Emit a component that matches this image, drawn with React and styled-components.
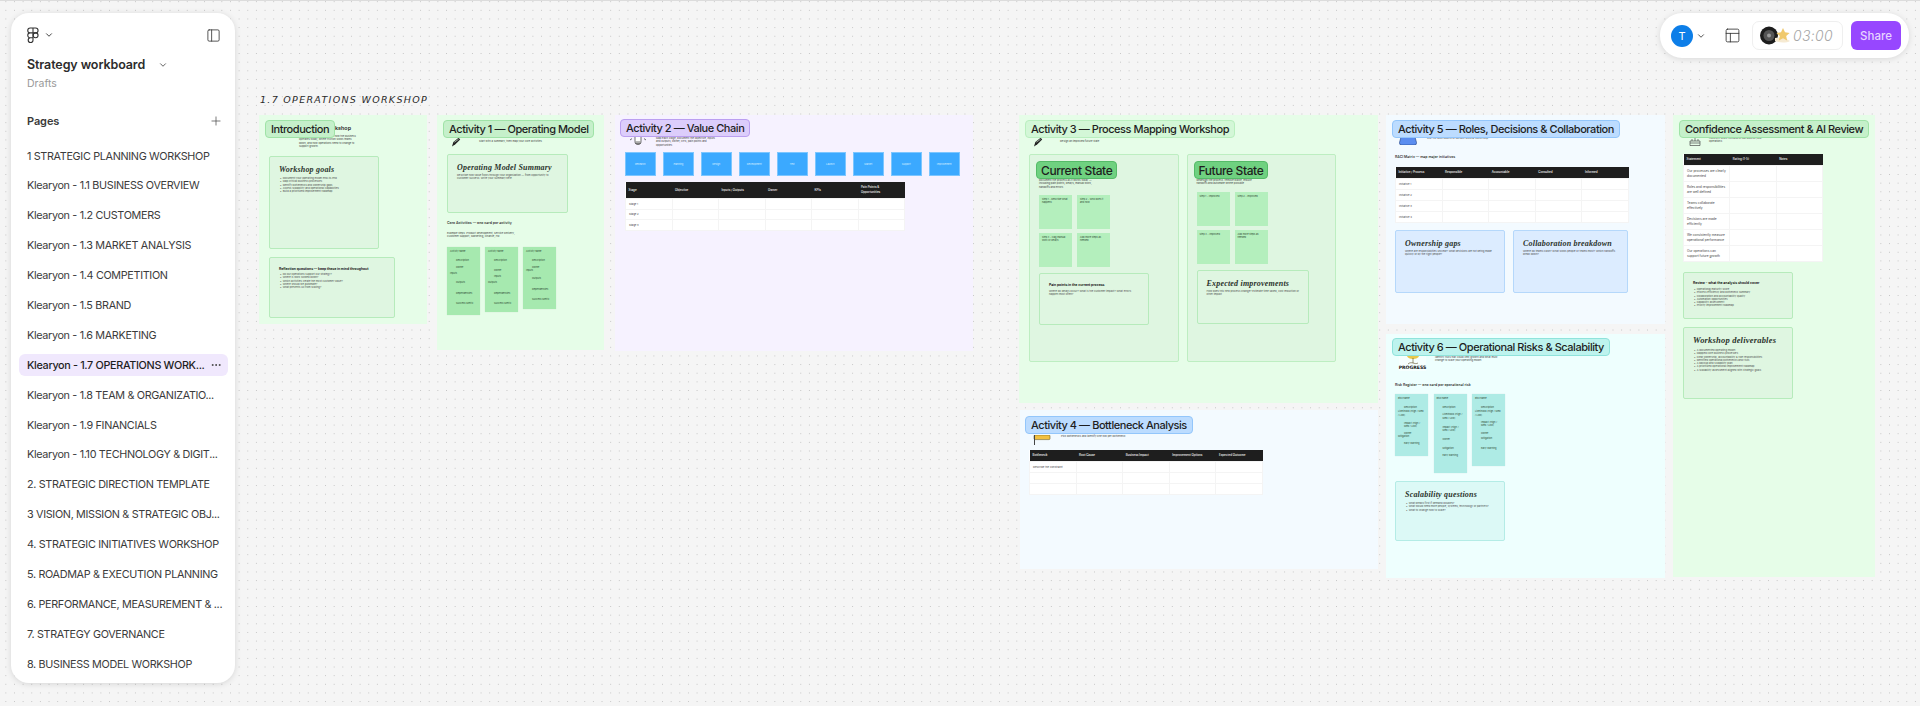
import React from 'react';
import styled, { createGlobalStyle } from 'styled-components';
import {
  ChevronDown,
  Ellipsis,
  PanelLeft,
  PanelsTopLeft,
  Plus,
} from 'lucide-react';

const GlobalStyle = createGlobalStyle`
  html, body {
    margin: 0;
    padding: 0;
    background: #f5f5f5;
  }
  body {
    font-family: Inter, "Liberation Sans", sans-serif;
    color: #1e1e1e;
  }
`;

const tones = {
  green: { section: '#e6fde8', card: '#dff6e1', line: '#b6ebbb', label: '#c5f0ca', labelLine: '#9fe3a7', sticky: '#a6e9af' },
  mint: { section: '#e6fde8', card: '#dff6e1', line: '#b6ebbb', label: '#d3f7d7', labelLine: '#b9efbf', sticky: '#a6e9af' },
  purple: { section: '#f6f2ff', card: '#efe8ff', line: '#d9c8fb', label: '#dccdfb', labelLine: '#bb9ff0', sticky: '#dccdfb' },
  blue: { section: '#f3faff', card: '#dcecff', line: '#b5d8fb', label: '#bcdcff', labelLine: '#93c6fb', sticky: '#bcdcff' },
  teal: { section: '#eefffe', card: '#dcf9f6', line: '#b4ece6', label: '#bdf3ee', labelLine: '#8fe3db', sticky: '#aeebe5' },
};

const handFont = `"Liberation Serif", "DejaVu Serif", serif`;

const Canvas = styled.div`
  position: relative;
  width: 1920px;
  height: 706px;
  overflow: hidden;
  box-sizing: border-box;
  border-top: 1px solid #dcdcdc;
  background-color: #f5f5f5;
  background-image: radial-gradient(circle at center, #c4c4c4 0.6px, transparent 0.9px);
  background-size: 8.65px 8.65px;
  background-position: 1.5px 5px;
`;

/* ---------- sidebar ---------- */

const Sidebar = styled.aside`
  position: absolute;
  left: 11px;
  top: 12px;
  width: 224px;
  height: 670px;
  box-sizing: border-box;
  padding: 12px 7px 0 8px;
  background: #fff;
  border-radius: 18px;
  box-shadow: 0 1px 6px rgba(0, 0, 0, 0.13);
`;

const SideTop = styled.div`
  display: flex;
  align-items: center;
  justify-content: space-between;
  height: 20px;
  padding: 0 7px 0 8px;
`;

const LogoButton = styled.div`
  display: flex;
  align-items: center;
  gap: 5px;
  color: #333;
`;

const FileTitle = styled.div`
  display: flex;
  align-items: center;
  gap: 13px;
  margin: 11px 0 0 8px;
  font-size: 12.5px;
  font-weight: 600;
  letter-spacing: -0.1px;
  line-height: 18px;
  color: #2c2c2c;
`;

const Drafts = styled.div`
  margin: 2px 0 0 8px;
  font-size: 10.5px;
  line-height: 16px;
  color: #9a9a9a;
`;

const PagesHead = styled.div`
  display: flex;
  align-items: center;
  justify-content: space-between;
  height: 18px;
  margin: 20px 5px 0 8px;
  font-size: 11px;
  font-weight: 600;
  letter-spacing: -0.1px;
  color: #3a3a3a;
`;

const PageList = styled.ul`
  list-style: none;
  margin: 15px 0 0;
  padding: 0;
`;

const PageRow = styled.li`
  display: flex;
  align-items: center;
  justify-content: space-between;
  height: 22px;
  margin-bottom: 7.9px;
  padding: 0 6px 0 8px;
  border-radius: 6px;
  font-size: 10.8px;
  letter-spacing: -0.33px;
  font-weight: ${(p) => (p.$active ? 500 : 400)};
  color: ${(p) => (p.$active ? '#1e1e1e' : '#3b3b3b')};
  background: ${(p) => (p.$active ? '#f0e8fd' : 'transparent')};
  white-space: nowrap;
`;

/* ---------- toolbar ---------- */

const Toolbar = styled.div`
  position: absolute;
  left: 1660px;
  top: 12px;
  width: 249px;
  height: 45px;
  box-sizing: border-box;
  display: flex;
  align-items: center;
  padding: 0 8px 0 11px;
  background: #fff;
  border-radius: 22px;
  box-shadow: 0 1px 6px rgba(0, 0, 0, 0.12);
`;

const Avatar = styled.div`
  display: flex;
  align-items: center;
  justify-content: center;
  width: 22px;
  height: 22px;
  border-radius: 50%;
  background: #0d7ee8;
  color: #fff;
  font-size: 11px;
`;

const AvatarMenu = styled.div`
  display: flex;
  align-items: center;
  gap: 3px;
  color: #444;
`;

const LayoutIcon = styled(PanelsTopLeft)`
  flex: none;
  margin-left: 18px;
  color: #333;
`;

const TimerPill = styled.div`
  display: flex;
  align-items: center;
  justify-content: space-between;
  width: 91px;
  height: 29px;
  box-sizing: border-box;
  margin: 0 8px 0 11px;
  padding: 0 9px 0 7px;
  border: 1px solid #efefef;
  border-radius: 7px;
`;

const TimerText = styled.span`
  font-size: 14px;
  font-style: italic;
  font-weight: 300;
  letter-spacing: 0.3px;
  color: #a6a6a6;
`;

const ShareButton = styled.button`
  width: 50px;
  height: 29px;
  padding: 0;
  border: 0;
  border-radius: 6px;
  background: #9747ff;
  color: #e7d5ff;
  font: 500 11.5px Inter, sans-serif;
`;

/* ---------- board ---------- */

const BoardTitle = styled.div`
  position: absolute;
  left: 260px;
  top: 93px;
  font-family: "DejaVu Sans", sans-serif;
  font-size: 9.5px;
  font-style: italic;
  letter-spacing: 1.3px;
  line-height: 12px;
  color: #2a2a2a;
  white-space: nowrap;
`;

const Section = styled.section`
  position: absolute;
  left: ${(p) => p.$x}px;
  top: ${(p) => p.$y - 1}px;
  width: ${(p) => p.$w}px;
  height: ${(p) => p.$h}px;
  box-sizing: border-box;
  padding-left: ${(p) => p.$pad || 10}px;
  background: ${(p) => tones[p.$tone].section};
`;

const Label = styled.div`
  position: absolute;
  left: ${(p) => p.$left ?? 6}px;
  top: ${(p) => p.$top ?? 5}px;
  z-index: 2;
  box-sizing: border-box;
  height: 18px;
  padding: 0 5px;
  display: flex;
  align-items: center;
  border: 1px solid ${(p) => tones[p.$tone].labelLine};
  border-radius: 4px;
  background: ${(p) => tones[p.$tone].label};
  font-size: 11px;
  font-weight: 500;
  letter-spacing: -0.45px;
  white-space: nowrap;
`;

const StateLabel = styled(Label)`
  left: 6px;
  top: 6px;
  height: 18px;
  font-size: 12px;
  letter-spacing: -0.4px;
  background: #6fd180;
  border-color: #55bb68;
  padding: 0 4px;
`;

const Head = styled.div`
  display: flex;
  align-items: flex-start;
  height: ${(p) => p.$h}px;
  box-sizing: border-box;
  padding: ${(p) => p.$top || 22}px 0 0 ${(p) => p.$left || 4}px;
  gap: ${(p) => p.$gap || 18}px;
`;

const Note = styled.p`
  margin: ${(p) => p.$mt || 0}px 0 0;
  width: ${(p) => p.$w || 70}px;
  font-size: 2.6px;
  line-height: 3.3px;
  color: #3a3a3a;
`;

const HeadStack = styled.div`
  margin-left: ${(p) => p.$left || 0}px;
`;

const CoveredHeading = styled.div`
  font-size: 5.4px;
  font-weight: 600;
  line-height: 7px;
  text-align: right;
  width: 52px;
`;

const Card = styled.div`
  box-sizing: border-box;
  flex: none;
  width: ${(p) => p.$w}px;
  height: ${(p) => p.$h}px;
  margin-top: ${(p) => p.$mt || 0}px;
  padding: ${(p) => p.$top || 8}px 8px 0 9px;
  background: ${(p) => tones[p.$tone].card};
  border: 1px solid ${(p) => tones[p.$tone].line};
  border-radius: 2px;
`;

const HandTitle = styled.div`
  font-family: ${handFont};
  font-size: ${(p) => p.$size || 8}px;
  font-style: italic;
  font-weight: 700;
  line-height: 9px;
  letter-spacing: 0.2px;
  white-space: nowrap;
  color: #2b332c;
`;

const BoldTitle = styled.div`
  font-size: 3.4px;
  font-weight: 700;
  line-height: 5px;
  white-space: nowrap;
`;

const SubTitle = styled.div`
  margin-top: ${(p) => p.$mt || 0}px;
  font-size: 3.5px;
  font-weight: 600;
  line-height: 6px;
  color: #3a3a3a;
`;

const Bullets = styled.ul`
  margin: ${(p) => p.$mt || 3}px 0 0;
  padding: 0;
  list-style: none;
  font-size: 2.6px;
  line-height: 3.3px;
  color: #4a4a4a;

  li::before {
    content: '•';
    margin: 0 1.2px 0 1px;
  }
`;

const CardText = styled.p`
  margin: ${(p) => p.$mt || 2}px 0 0;
  font-size: 2.6px;
  line-height: 3.3px;
  color: #4a4a4a;
`;

const Row = styled.div`
  display: flex;
  align-items: flex-start;
  gap: ${(p) => p.$gap || 5}px;
  margin-top: ${(p) => p.$mt || 0}px;
`;

const MiniCard = styled.div`
  box-sizing: border-box;
  width: 33px;
  height: ${(p) => p.$h}px;
  padding: 3px 3px 0;
  background: ${(p) => tones[p.$tone].sticky};
  box-shadow: 0 0 1px rgba(0, 0, 0, 0.12);
`;

const MiniLine = styled.div`
  margin-top: ${(p) => p.$gap || 0}px;
  padding-left: ${(p) => p.$indent || 0}px;
  font-size: 2.4px;
  line-height: 3.2px;
  color: #2f4a33;
`;

const Chain = styled.div`
  display: flex;
  gap: 7.5px;
`;

const ChainBox = styled.div`
  display: flex;
  align-items: center;
  justify-content: center;
  box-sizing: border-box;
  width: 30.5px;
  height: 24px;
  background: #3ba9ff;
  border: 1px solid #7cc6ff;
  color: #d9efff;
  font-size: 2.4px;
`;

const MiniTable = styled.table`
  width: ${(p) => p.$w}px;
  margin-top: ${(p) => p.$mt || 0}px;
  table-layout: fixed;
  border-collapse: collapse;
  background: #fff;
  font-size: ${(p) => p.$size || 2.7}px;
  line-height: ${(p) => (p.$size ? 5 : 4.2)}px;

  th {
    height: ${(p) => p.$headH || 11}px;
    padding: 0 3px;
    background: #1e1e1e;
    color: #e8e8e8;
    font-size: 2.9px;
    line-height: 4.6px;
    font-weight: 600;
    text-align: left;
    white-space: pre-line;
  }

  td {
    height: ${(p) => p.$rowH || 9.5}px;
    padding: 0 3px;
    border: 0.5px solid #f4f4f4;
    color: #444;
  }
`;

const StatePanels = styled.div`
  display: flex;
  gap: 8px;
`;

const StatePanel = styled.div`
  position: relative;
  box-sizing: border-box;
  width: 149.5px;
  height: 208px;
  padding: 24px 0 0 9px;
  background: #dff6e1;
  border: 1px solid #bdeec1;
  border-radius: 2px;
`;

const StickyGrid = styled.div`
  display: grid;
  grid-template-columns: 33px 33px;
  grid-auto-rows: 34px;
  gap: 4px 5px;
  margin: 6px 0;
`;

const Sticky = styled.div`
  box-sizing: border-box;
  padding: 3px;
  background: #b4efbd;
  font-size: 2.4px;
  line-height: 3.2px;
  color: #2f4a33;
`;

const ProgressMark = styled.div`
  display: flex;
  flex-direction: column;
  align-items: center;
  width: 27px;
  background: #f6fffe;
`;

const ProgressText = styled.span`
  font-family: "DejaVu Sans", sans-serif;
  font-size: 4.6px;
  font-weight: 700;
  line-height: 6px;
  color: #111;
`;

/* ---------- drawings ---------- */

const FigmaLogo = () => (
  <svg width="12" height="17" viewBox="0 0 12 17" fill="none" stroke="#333" strokeWidth="1.1">
    <path d="M6 1H3.2a2.4 2.4 0 0 0 0 4.9H6zM6 1h2.6a2.4 2.4 0 0 1 0 4.9H6zM6 5.9H3.2a2.4 2.4 0 0 0 0 4.9H6zM6 10.8H3.2A2.4 2.4 0 1 0 6 13.2z" />
    <circle cx="8.6" cy="8.35" r="2.45" />
  </svg>
);

const Pencil = () => (
  <svg width="10" height="10" viewBox="0 0 10 10">
    <path d="M1 9.5 2.4 5 7.6 0.8 9.2 2.6 4.4 7.2z" fill="#222" />
    <path d="M3.4 5.2 7.6 2.2" stroke="#e6fde8" strokeWidth="0.6" />
  </svg>
);

const Bulb = () => (
  <svg width="18" height="11" viewBox="0 0 18 11" fill="none" stroke="#333" strokeWidth="0.7">
    <path d="M6 0v6.5c0 2 1 3 3 3s3-1 3-3V0" fill="#fff" />
    <path d="M6.5 7h5M6.5 8.4h5M1 5l2-1.4M17 5l-2-1.4" />
  </svg>
);

const Flag = () => (
  <svg width="18" height="10" viewBox="0 0 18 10">
    <rect x="1" y="0" width="16" height="4.6" rx="1" fill="#f1c040" stroke="#5a4a10" strokeWidth="0.5" />
    <rect x="1" y="0" width="1" height="10" fill="#444" />
  </svg>
);

const BlueBlob = () => (
  <svg width="18" height="8" viewBox="0 0 18 8">
    <path d="M2 0h14l1.5 5.5Q18 8 15 8H3Q0 8 0.5 5.5z" fill="#5b8def" stroke="#1d3e80" strokeWidth="0.6" />
  </svg>
);

const Tree = () => (
  <svg width="20" height="9" viewBox="0 0 20 9" fill="none" stroke="#5d4a20" strokeWidth="0.6">
    <path d="M4 0h12c-.5 2-3 3-6 3S4.5 2 4 0z" fill="#e8c84a" stroke="none" />
    <path d="M10 2v5M5 8c1.5-1.5 3.5-1.5 5-1s3.5 1 5 0" />
  </svg>
);

const Cake = () => (
  <svg width="12" height="9" viewBox="0 0 12 9" fill="none" stroke="#333" strokeWidth="0.6">
    <path d="M1 4h10v4.5H1zM1 6h10M3 4V2M6 4V1M9 4V2" />
  </svg>
);

const TimerArt = () => (
  <svg width="31" height="19" viewBox="0 0 31 19">
    <circle cx="9" cy="9.5" r="9" fill="#1d1d1d" />
    <circle cx="9" cy="9.5" r="5.5" fill="#555" />
    <circle cx="9" cy="9.5" r="2" fill="#9a9a9a" />
    <path d="M15 12c3-1 10-1 15 3-3 2-11 2-15 0z" fill="#f6ead2" />
    <path d="m23 2 2 4.3 4.6.6-3.4 3.1.9 4.6L23 12.3l-4.1 2.3.9-4.6-3.4-3.1 4.6-.6z" fill="#f0c96c" />
  </svg>
);

/* ---------- data ---------- */

const pages = [
  '1 STRATEGIC PLANNING WORKSHOP',
  'Klearyon - 1.1 BUSINESS OVERVIEW',
  'Klearyon - 1.2 CUSTOMERS',
  'Klearyon - 1.3 MARKET ANALYSIS',
  'Klearyon - 1.4 COMPETITION',
  'Klearyon - 1.5 BRAND',
  'Klearyon - 1.6 MARKETING',
  'Klearyon - 1.7 OPERATIONS WORK...',
  'Klearyon - 1.8 TEAM & ORGANIZATIO...',
  'Klearyon - 1.9 FINANCIALS',
  'Klearyon - 1.10 TECHNOLOGY & DIGIT...',
  '2. STRATEGIC DIRECTION TEMPLATE',
  '3 VISION, MISSION & STRATEGIC OBJ...',
  '4. STRATEGIC INITIATIVES WORKSHOP',
  '5. ROADMAP & EXECUTION PLANNING',
  '6. PERFORMANCE, MEASUREMENT & ...',
  '7. STRATEGY GOVERNANCE',
  '8. BUSINESS MODEL WORKSHOP',
];

const activityCards = [
  { h: 68, lines: [['Activity name'], ['Description', 6, 6], ['Owner', 6, 4], ['Inputs', 0, 3], ['Outputs', 6, 6], ['Dependencies', 6, 7], ['Success Metric', 6, 7]] },
  { h: 65, lines: [['Activity name'], ['Description', 6, 6], ['Owner', 6, 7], ['Inputs', 6, 3], ['Outputs', 0, 3], ['Dependencies', 6, 7], ['Success Metric', 6, 7]] },
  { h: 62, lines: [['Activity name'], ['Description', 6, 6], ['Owner', 6, 4], ['Inputs', 0, 0], ['Outputs', 6, 5], ['Dependencies', 6, 7], ['Success Metric', 6, 7]] },
];

const riskCards = [
  { h: 62, lines: [['Risk name'], ['Description', 6, 6], ['Likelihood (High / Med / Low)', 0, 1], ['Impact (High / Med / Low)', 6, 5], ['Owner', 6, 4], ['Mitigation', 0, 0], ['Early warning', 6, 3]] },
  { h: 79, lines: [['Risk name'], ['Description', 6, 6], ['Likelihood (High / Med / Low)', 6, 4], ['Impact (High / Med / Low)', 6, 6], ['Owner', 6, 6], ['Mitigation', 6, 6], ['Early warning', 6, 3]] },
  { h: 72, lines: [['Risk name'], ['Description', 6, 6], ['Likelihood (High / Med / Low)', 0, 1], ['Impact (High / Med / Low)', 6, 4], ['Owner', 6, 5], ['Mitigation', 6, 2], ['Early warning', 6, 6]] },
];

const chainSteps = ['Research', 'Planning', 'Design', 'Development', 'Test', 'Launch', 'Market', 'Support', 'Improvement'];

const confidenceRows = [
  'Our processes are clearly documented',
  'Roles and responsibilities are well defined',
  'Teams collaborate effectively',
  'Decisions are made efficiently',
  'We consistently measure operational performance',
  'Our operations can support future growth',
];

function SimpleTable({ columns, rows, width, ...rest }) {
  return (
    <MiniTable $w={width} {...rest}>
      <thead>
        <tr>
          {columns.map((c) => (
            <th key={c}>{c}</th>
          ))}
        </tr>
      </thead>
      <tbody>
        {rows.map((r, i) => (
          <tr key={i}>
            {columns.map((c, j) => (
              <td key={c}>{j === 0 ? r : ''}</td>
            ))}
          </tr>
        ))}
      </tbody>
    </MiniTable>
  );
}

function LineCard({ tone, card }) {
  return (
    <MiniCard $tone={tone} $h={card.h}>
      {card.lines.map(([text, indent, gap]) => (
        <MiniLine key={text} $indent={indent} $gap={gap}>
          {text}
        </MiniLine>
      ))}
    </MiniCard>
  );
}

export default function App() {
  return (
    <Canvas>
      <GlobalStyle />

      <BoardTitle>1.7 OPERATIONS WORKSHOP</BoardTitle>

      <Section $x={259} $y={115} $w={168} $h={209} $tone="green">
        <Label $tone="green" $left={6} $top={5}>Introduction</Label>
        <Head $h={41} $top={10} $left={0} $gap={0}>
          <HeadStack $left={26}>
            <CoveredHeading>Workshop</CoveredHeading>
            <Note $w={60} $mt={3}>
              Use this workshop to review how the business operates today, where friction
              slows teams down, and how operations need to change to support growth.
            </Note>
          </HeadStack>
        </Head>
        <Card $tone="green" $w={110} $h={93}>
          <HandTitle>Workshop goals</HandTitle>
          <Bullets>
            <li>Document your operating model end-to-end</li>
            <li>Map critical business processes</li>
            <li>Identify bottlenecks and ownership gaps</li>
            <li>Assess scalability and operational capabilities</li>
            <li>Build a prioritized improvement roadmap</li>
          </Bullets>
        </Card>
        <Card $tone="green" $w={126} $h={61} $mt={8} $top={9}>
          <BoldTitle>Reflection questions — keep these in mind throughout</BoldTitle>
          <Bullets $mt={1}>
            <li>Do our operations support our strategy?</li>
            <li>Where is work slowed down?</li>
            <li>Which activities create the most customer value?</li>
            <li>Where should we automate?</li>
            <li>What prevents us from scaling?</li>
          </Bullets>
        </Card>
      </Section>

      <Section $x={437} $y={115} $w={167} $h={235} $tone="green">
        <Label $tone="green" $left={6} $top={5}>Activity 1 — Operating Model</Label>
        <Head $h={39}>
          <Pencil />
          <Note $w={70} $mt={3}>Start with a summary, then map your core activities.</Note>
        </Head>
        <Card $tone="green" $w={121} $h={59}>
          <HandTitle>Operating Model Summary</HandTitle>
          <CardText>
            Describe how value flows through your organization — from
            opportunity to customer success. Write your summary
            here.
          </CardText>
        </Card>
        <SubTitle $mt={7}>Core Activities — one card per activity</SubTitle>
        <Note $w={70} $mt={6}>
          Example steps: Product development, Service Delivery, Customer Support, Marketing, Finance, HR
        </Note>
        <Row $mt={8}>
          {activityCards.map((c, i) => (
            <LineCard key={i} tone="green" card={c} />
          ))}
        </Row>
      </Section>

      <Section $x={615} $y={115} $w={358} $h={236} $tone="purple">
        <Label $tone="purple" $left={5} $top={4}>Activity 2 — Value Chain</Label>
        <Head $h={37} $top={20} $gap={9}>
          <Bulb />
          <Note $w={62} $mt={2}>
            Map each stage, document the objective, inputs and outputs, owner, KPIs, pain points and opportunities.
          </Note>
        </Head>
        <Chain>
          {chainSteps.map((s) => (
            <ChainBox key={s}>{s}</ChainBox>
          ))}
        </Chain>
        <SimpleTable
          width={280}
          $mt={6}
          $headH={16}
          columns={['Stage', 'Objective', 'Inputs / Outputs', 'Owner', 'KPIs', 'Pain Points &\nOpportunities']}
          rows={['Stage 1', 'Stage 2', 'Stage 3']}
        />
      </Section>

      <Section $x={1019} $y={115} $w={359} $h={288} $tone="green">
        <Label $tone="mint" $left={6} $top={5}>Activity 3 — Process Mapping Workshop</Label>
        <Head $h={39} $gap={17}>
          <Pencil />
          <Note $w={60} $mt={3}>Design an improved future state.</Note>
        </Head>
        <StatePanels>
          <StatePanel>
            <StateLabel $tone="green">Current State</StateLabel>
            <Note $w={64}>Document the process as it works today — including pain points, delays, manual work, handoffs and errors.</Note>
            <StickyGrid>
              <Sticky>Step 1 - Describe what happens</Sticky>
              <Sticky>Step 2 - Who does it and how</Sticky>
              <Sticky>Step 3 - Flag manual work or delays</Sticky>
              <Sticky>Add more steps as needed</Sticky>
            </StickyGrid>
            <Card $tone="green" $w={110} $h={52} $top={9}>
              <BoldTitle>Pain points in the current process</BoldTitle>
              <CardText>
                Where do delays occur? What is the customer impact? What errors happen most often?
              </CardText>
            </Card>
          </StatePanel>
          <StatePanel>
            <StateLabel $tone="green">Future State</StateLabel>
            <Note $w={64}>Redesign the process: remove waste, reduce handoffs and automate where possible.</Note>
            <StickyGrid>
              <Sticky>Step 1 - Improved</Sticky>
              <Sticky>Step 2 - Improved</Sticky>
              <Sticky>Step 3 - Improved</Sticky>
              <Sticky>Add more steps as needed</Sticky>
            </StickyGrid>
            <Card $tone="green" $w={112} $h={54} $top={8}>
              <HandTitle>Expected improvements</HandTitle>
              <CardText>
                How does this new process change? Estimate time saved, cost reduction or other impact.
              </CardText>
            </Card>
          </StatePanel>
        </StatePanels>
      </Section>

      <Section $x={1020} $y={410} $w={358} $h={159} $tone="blue" $pad={9}>
        <Label $tone="blue" $left={5} $top={6}>Activity 4 — Bottleneck Analysis</Label>
        <Head $h={40} $top={25} $gap={10}>
          <Flag />
          <Note $w={70}>Pick bottlenecks and identify one row per bottleneck.</Note>
        </Head>
        <SimpleTable
          width={234}
          $rowH={10}
          columns={['Bottleneck', 'Root Cause', 'Business Impact', 'Improvement Options', 'Expected Outcome']}
          rows={['Describe the constraint', '', '']}
        />
      </Section>

      <Section $x={1386} $y={115} $w={279} $h={209} $tone="blue" $pad={9}>
        <Label $tone="blue" $left={6} $top={5}>Activity 5 — Roles, Decisions &amp; Collaboration</Label>
        <Head $h={39} $gap={10}>
          <BlueBlob />
          <Note $w={70}>Use the RACI Matrix to surface unclear ownership.</Note>
        </Head>
        <SubTitle>RACI Matrix — map major initiatives</SubTitle>
        <SimpleTable
          width={234}
          $mt={7}
          $rowH={10}
          columns={['Initiative / Process', 'Responsible', 'Accountable', 'Consulted', 'Informed']}
          rows={['Initiative 1', 'Initiative 2', 'Initiative 3', 'Initiative 4']}
        />
        <Row $gap={8} $mt={7}>
          <Card $tone="blue" $w={110} $h={63} $top={8}>
            <HandTitle>Ownership gaps</HandTitle>
            <CardText>
              Where are responsibilities unclear? What decisions are not being made quickly or by the right people?
            </CardText>
          </Card>
          <Card $tone="blue" $w={115} $h={63} $top={8}>
            <HandTitle>Collaboration breakdown</HandTitle>
            <CardText>
              Where do teams clash? What slows people or teams most? Which handoffs break down?
            </CardText>
          </Card>
        </Row>
      </Section>

      <Section $x={1386} $y={334} $w={279} $h={244} $tone="teal" $pad={9}>
        <Label $tone="teal" $left={6} $top={4}>Activity 6 — Operational Risks &amp; Scalability</Label>
        <Head $h={48} $top={22} $gap={9}>
          <ProgressMark>
            <Tree />
            <ProgressText>PROGRESS</ProgressText>
          </ProgressMark>
          <Note $w={66}>Identify risks that could limit growth and what must change to scale your operating model.</Note>
        </Head>
        <SubTitle>Risk Register — one card per operational risk</SubTitle>
        <Row $gap={5.5} $mt={6}>
          {riskCards.map((c, i) => (
            <LineCard key={i} tone="teal" card={c} />
          ))}
        </Row>
        <Card $tone="teal" $w={110} $h={60} $mt={8} $top={8}>
          <HandTitle>Scalability questions</HandTitle>
          <Bullets $mt={3}>
            <li>What breaks first if demand doubles?</li>
            <li>What would need more people, systems, technology or partners?</li>
            <li>What to change now to scale?</li>
          </Bullets>
        </Card>
      </Section>

      <Section $x={1673} $y={115} $w={202} $h={462} $tone="green">
        <Label $tone="green" $left={6} $top={5}>Confidence Assessment &amp; AI Review</Label>
        <Head $h={39} $left={6} $gap={8}>
          <Cake />
          <Note $w={58}>Honestly score this and AI can assess your operations.</Note>
        </Head>
        <SimpleTable
          width={140}
          $size={3.2}
          $rowH={15}
          columns={['Statement', 'Rating (1-5)', 'Notes']}
          rows={confidenceRows}
        />
        <Card $tone="green" $w={110} $h={47} $mt={10}>
          <BoldTitle>Review - what the analysis should cover</BoldTitle>
          <Bullets $mt={2}>
            <li>Operational maturity score</li>
            <li>Process efficiency and bottleneck summary</li>
            <li>Collaboration and accountability quality</li>
            <li>Automation opportunities</li>
            <li>Capability assessment</li>
            <li>Priority improvement roadmap</li>
          </Bullets>
        </Card>
        <Card $tone="green" $w={110} $h={72} $mt={8}>
          <HandTitle $size={8.5}>Workshop deliverables</HandTitle>
          <Bullets $mt={4}>
            <li>A documented operating model</li>
            <li>Mapped core business processes</li>
            <li>Clear ownership, accountability &amp; role responsibilities</li>
            <li>Identified operational bottlenecks and risks</li>
            <li>A backup and scalability plan</li>
            <li>A prioritized operational improvement roadmap</li>
            <li>A scalability assessment aligned with strategic goals</li>
          </Bullets>
        </Card>
      </Section>

      <Sidebar>
        <SideTop>
          <LogoButton>
            <FigmaLogo />
            <ChevronDown size={10} strokeWidth={2.2} />
          </LogoButton>
          <PanelLeft size={15} strokeWidth={1.3} color="#333" />
        </SideTop>
        <FileTitle>
          Strategy workboard
          <ChevronDown size={10} strokeWidth={2.2} color="#555" />
        </FileTitle>
        <Drafts>Drafts</Drafts>
        <PagesHead>
          Pages
          <Plus size={14} strokeWidth={1.2} color="#444" />
        </PagesHead>
        <PageList>
          {pages.map((p, i) => (
            <PageRow key={p} $active={i === 7}>
              {p}
              {i === 7 && <Ellipsis size={12} color="#444" />}
            </PageRow>
          ))}
        </PageList>
      </Sidebar>

      <Toolbar>
        <AvatarMenu>
          <Avatar>T</Avatar>
          <ChevronDown size={10} strokeWidth={2.2} />
        </AvatarMenu>
        <LayoutIcon size={17} strokeWidth={1.2} />
        <TimerPill>
          <TimerArt />
          <TimerText>03:00</TimerText>
        </TimerPill>
        <ShareButton>Share</ShareButton>
      </Toolbar>
    </Canvas>
  );
}
